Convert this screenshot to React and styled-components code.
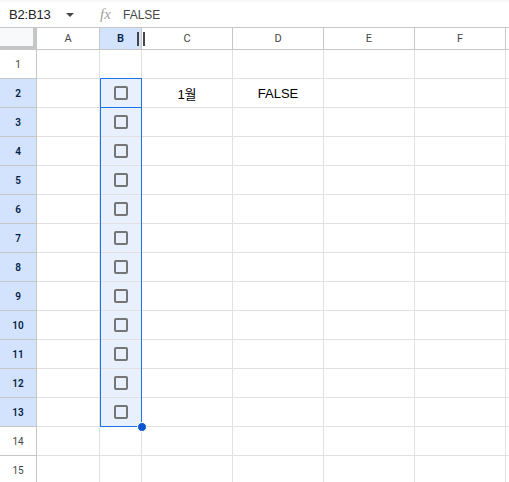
import React from "react";
import styled, { createGlobalStyle } from "styled-components";

const GlobalStyle = createGlobalStyle`
  html, body {
    margin: 0;
    padding: 0;
    background: #fff;
    font-family: "Liberation Sans", Arial, "Noto Sans CJK KR", sans-serif;
  }
`;

const Page = styled.div`
  width: 509px;
  height: 482px;
  overflow: hidden;
  background: #fff;
`;

const FormulaBar = styled.div`
  height: 28px;
  box-sizing: border-box;
  border-top: 2px solid #f8f9fa;
  border-bottom: 1px solid #c4c7c5;
  display: flex;
  align-items: center;
  font-size: 13px;
  color: #202124;
`;

const NameBox = styled.div`
  width: 90px;
  padding-left: 9px;
  padding-right: 16px;
  box-sizing: border-box;
  display: flex;
  align-items: center;
  justify-content: space-between;
  letter-spacing: -0.2px;
`;

const Caret = styled.span`
  width: 0;
  height: 0;
  border-left: 4px solid transparent;
  border-right: 4px solid transparent;
  border-top: 4px solid #444746;
  margin-top: 1px;
`;

const Fx = styled.span`
  font-family: "Liberation Serif", serif;
  font-style: italic;
  font-size: 15px;
  color: #a0a0a0;
  margin-left: 10px;
  width: 23px;
`;

const FormulaText = styled.span`
  font-size: 12px;
  color: #444746;
`;

const Sheet = styled.div`
  position: relative;
  display: grid;
  grid-template-columns: 37px 63px 42px 91px 91px 91px 91px 91px;
  grid-template-rows: 22px repeat(15, 29px);
`;

const Cell = styled.div`
  box-sizing: border-box;
  border-right: 1px solid #e1e1e1;
  border-bottom: 1px solid #e1e1e1;
  display: flex;
  align-items: center;
  justify-content: center;
  font-size: 13px;
  color: #000;
  background: ${(p) => (p.$sel ? "#e8f0fe" : "#fff")};
`;

const Corner = styled.div`
  box-sizing: border-box;
  background: #f8f9fa;
  border-right: 4px solid #c4c7c5;
  border-bottom: 4px solid #c4c7c5;
`;

const ColHead = styled.div`
  position: relative;
  box-sizing: border-box;
  border-right: 1px solid #c4c7c5;
  border-bottom: 1px solid #c4c7c5;
  display: flex;
  align-items: center;
  justify-content: center;
  font-family: Roboto, "Liberation Sans", sans-serif;
  font-size: 11px;
  color: ${(p) => (p.$sel ? "#041e49" : "#444746")};
  font-weight: ${(p) => (p.$sel ? 600 : 400)};
  background: ${(p) => (p.$sel ? "#d3e3fd" : "#fff")};
`;

const RowHead = styled(ColHead)`
  font-size: 10px;
  padding-top: 1px;
`;

const Grip = styled.div`
  position: absolute;
  z-index: 3;
  left: 37px;
  top: 4px;
  width: 8px;
  height: 14px;
  box-sizing: border-box;
  border-left: 2px solid #444746;
  border-right: 2px solid #444746;
`;

const Checkbox = styled.span`
  width: 14px;
  height: 14px;
  box-sizing: border-box;
  border: 2px solid #757575;
  border-radius: 2px;
`;

const Range = styled.div`
  position: absolute;
  box-sizing: border-box;
  border: 1px solid #1a73e8;
  pointer-events: none;
`;

const FillHandle = styled.div`
  position: absolute;
  width: 8px;
  height: 8px;
  border-radius: 50%;
  background: #0b57d0;
  border: 1px solid #fff;
  transform: translate(-50%, -50%);
`;

const columns = ["A", "B", "C", "D", "E", "F", "G"];
const HEADER_H = 22;
const ROW_H = 29;
const rowTop = (r) => HEADER_H + (r - 1) * ROW_H;

const values = { C2: "1월", D2: "FALSE" };

const App = () => {
  const rows = Array.from({ length: 15 }, (_, i) => i + 1);
  const isSel = (c, r) => c === "B" && r >= 2 && r <= 13;

  return (
    <Page>
      <GlobalStyle />
      <FormulaBar>
        <NameBox>
          B2:B13
          <Caret />
        </NameBox>
        <Fx>fx</Fx>
        <FormulaText>FALSE</FormulaText>
      </FormulaBar>
      <Sheet>
        <Corner />
        {columns.map((c) => (
          <ColHead key={c} $sel={c === "B"}>
            {c !== "G" && c}
            {c === "B" && <Grip />}
          </ColHead>
        ))}
        {rows.map((r) => (
          <React.Fragment key={r}>
            <RowHead $sel={r >= 2 && r <= 13}>{r}</RowHead>
            {columns.map((c) => (
              <Cell key={c} $sel={isSel(c, r)}>
                {isSel(c, r) ? <Checkbox /> : values[c + r]}
              </Cell>
            ))}
          </React.Fragment>
        ))}
        <Range
          style={{
            left: 100,
            top: rowTop(2) - 1,
            width: 42,
            height: rowTop(14) - rowTop(2) + 1,
          }}
        />
        <Range style={{ left: 100, top: rowTop(2) - 1, width: 42, height: ROW_H + 1 }} />
        <FillHandle style={{ left: 141.5, top: rowTop(14) - 0.5 }} />
      </Sheet>
    </Page>
  );
};

export default App;
